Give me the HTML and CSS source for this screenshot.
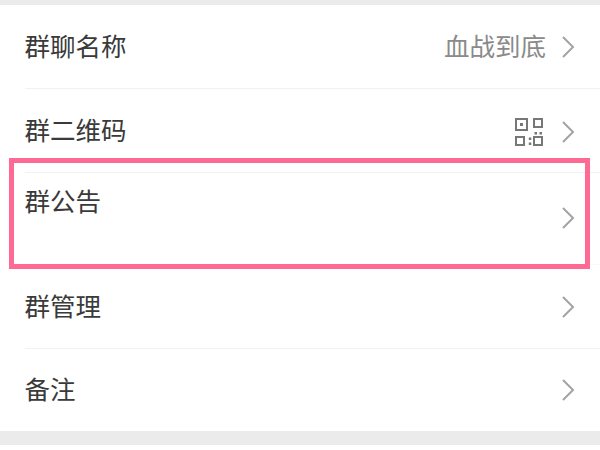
FILE: index.html
```html
<!DOCTYPE html>
<html lang="zh">
<head>
<meta charset="utf-8">
<title>群设置</title>
<link rel="stylesheet" href="styles.css">
</head>
<body>
<div class="list">
  <div class="row row-a"><span class="label">群聊名称</span><span class="value">血战到底</span><svg class="chev" viewBox="0 0 14 24"><path d="M2 2l10 10L2 22"/></svg></div>
  <div class="row row-b"><span class="label">群二维码</span>
    <svg class="qr" viewBox="0 0 28 28"><path class="qr-line" d="M1 1h11v11H1zM19 1h8v8h-8zM1 19h8v8H1zM19 19h8v8h-8z"/><path class="qr-dot" d="M5 5h3v3H5zM19.500 14h2.500v2.500h-2.500zM24.500 14h2.500v2.500h-2.500zM13.800 19.500h2.500v2.500h-2.500zM13.800 24.500h2.500v2.500h-2.500z"/></svg>
    <svg class="chev" viewBox="0 0 14 24"><path d="M2 2l10 10L2 22"/></svg></div>
  <div class="row row-c"><span class="label">群公告</span><svg class="chev" viewBox="0 0 14 24"><path d="M2 2l10 10L2 22"/></svg></div>
  <div class="row row-d"><span class="label">群管理</span><svg class="chev" viewBox="0 0 14 24"><path d="M2 2l10 10L2 22"/></svg></div>
  <div class="row row-e"><span class="label">备注</span><svg class="chev" viewBox="0 0 14 24"><path d="M2 2l10 10L2 22"/></svg></div>
</div>
<div class="highlight"></div>
</body>
</html>
```
FILE: styles.css
```css
html, body {
  margin: 0;
  padding: 0;
}
body {
  width: 600px;
  height: 450px;
  overflow: hidden;
  position: relative;
  background: #fff;
  font-family: "Noto Sans CJK SC", "Noto Sans", sans-serif;
}
.list {
  margin-top: 5px;
  border-bottom: 14px solid #ebebeb;
  background: #fff;
  box-shadow: 0 -5px 0 #ebebeb;
}
.row {
  display: flex;
  align-items: center;
  box-sizing: border-box;
  margin-left: 25px;
  padding-right: 25px;
  border-bottom: 1px solid #f1f1f1;
}
.row-a { height: 84px; }
.row-b { height: 84px; }
.row-c { height: 92px; align-items: flex-start; border-bottom-color: #f9f9f9; }
.row-d { height: 84px; }
.row-e { height: 82px; border-bottom: 0; }
.label {
  font-size: 25.5px;
  line-height: 30px;
  color: #3a3a3a;
  flex: 1;
  margin-left: -0.5px;
  padding-bottom: 4px;
}
.row-c .label { margin-top: 12px; }
.value {
  font-size: 25.5px;
  line-height: 30px;
  color: #8a8a8a;
  margin-right: 15px;
  padding-bottom: 4px;
}
.chev {
  width: 14px;
  height: 24px;
  flex: none;
}
.chev path {
  fill: none;
  stroke: #a3a3a3;
  stroke-width: 2;
}
.row-b .chev { margin-top: 2px; }
.row-c .chev { margin-top: 33px; }
.qr {
  width: 28px;
  height: 28px;
  margin-right: 18px;
  margin-top: 2px;
  flex: none;
}
.qr-line {
  fill: none;
  stroke: #777;
  stroke-width: 2;
}
.qr-dot {
  fill: #777;
}
.highlight {
  position: absolute;
  left: 9px;
  top: 158px;
  width: 581px;
  height: 111px;
  box-sizing: border-box;
  border: 5px solid #ff6a94;
}
```
